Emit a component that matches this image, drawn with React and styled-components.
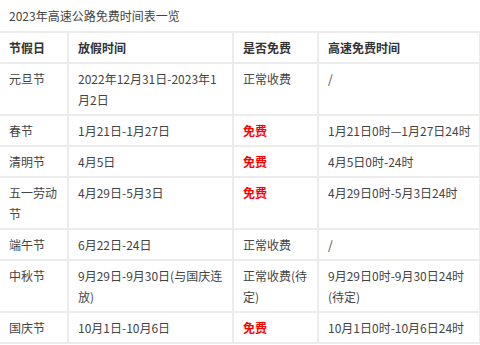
import React from 'react';
import styled, { createGlobalStyle } from 'styled-components';

const GlobalStyle = createGlobalStyle`
  body {
    margin: 0;
    background: #fff;
    font-family: "Noto Sans CJK SC", "Noto Sans", sans-serif;
  }
`;

const Page = styled.div`
  width: 480px;
  overflow: hidden;
`;

const Title = styled.div`
  height: 31px;
  padding-left: 9px;
  line-height: 31px;
  font-size: 12px;
  color: #444;
`;

const Table = styled.table`
  width: 480px;
  border-collapse: collapse;
  table-layout: fixed;
  font-size: 12px;
  line-height: 21px;
  color: #444;
`;

const Col = styled.col`
  width: ${({w}) => w}px;
`;

const HeadRow = styled.tr`
  border-top: 2px solid #ececec;
`;

const Th = styled.th`
  padding: 4px 9px;
  text-align: left;
  font-weight: bold;
  color: #333;
  border-right: 2px solid #ececec;
  border-bottom: 2px solid #ececec;
`;

const Td = styled.td`
  padding: 4px ${({last}) => last ? '3px' : '9px'} 4px 9px;
  vertical-align: top;
  border-right: 2px solid #ececec;
  border-bottom: 2px solid #ececec;
  color: ${({free}) => free ? '#ff0000' : '#444'};
  font-weight: ${({free}) => free ? 'bold' : 'normal'};
`;

const rows = [
  ['元旦节', '2022年12月31日-2023年1月2日', '正常收费', '/'],
  ['春节', '1月21日-1月27日', '免费', '1月21日0时—1月27日24时'],
  ['清明节', '4月5日', '免费', '4月5日0时-24时'],
  ['五一劳动节', '4月29日-5月3日', '免费', '4月29日0时-5月3日24时'],
  ['端午节', '6月22日-24日', '正常收费', '/'],
  ['中秋节', '9月29日-9月30日(与国庆连放)', '正常收费(待定)', '9月29日0时-9月30日24时(待定)'],
  ['国庆节', '10月1日-10月6日', '免费', '10月1日0时-10月6日24时'],
];

export default function App() {
  return (
    <Page>
      <GlobalStyle />
      <Title>2023年高速公路免费时间表一览</Title>
      <Table>
        <colgroup>
          <Col w={68} />
          <Col w={165} />
          <Col w={85} />
          <Col w={162} />
        </colgroup>
        <thead>
          <HeadRow>
            <Th>节假日</Th>
            <Th>放假时间</Th>
            <Th>是否免费</Th>
            <Th>高速免费时间</Th>
          </HeadRow>
        </thead>
        <tbody>
          {rows.map(([name, days, fee, time]) => (
            <tr key={name}>
              <Td>{name}</Td>
              <Td>{days}</Td>
              <Td free={fee === '免费'}>{fee}</Td>
              <Td last>{time}</Td>
            </tr>
          ))}
        </tbody>
      </Table>
    </Page>
  );
}
